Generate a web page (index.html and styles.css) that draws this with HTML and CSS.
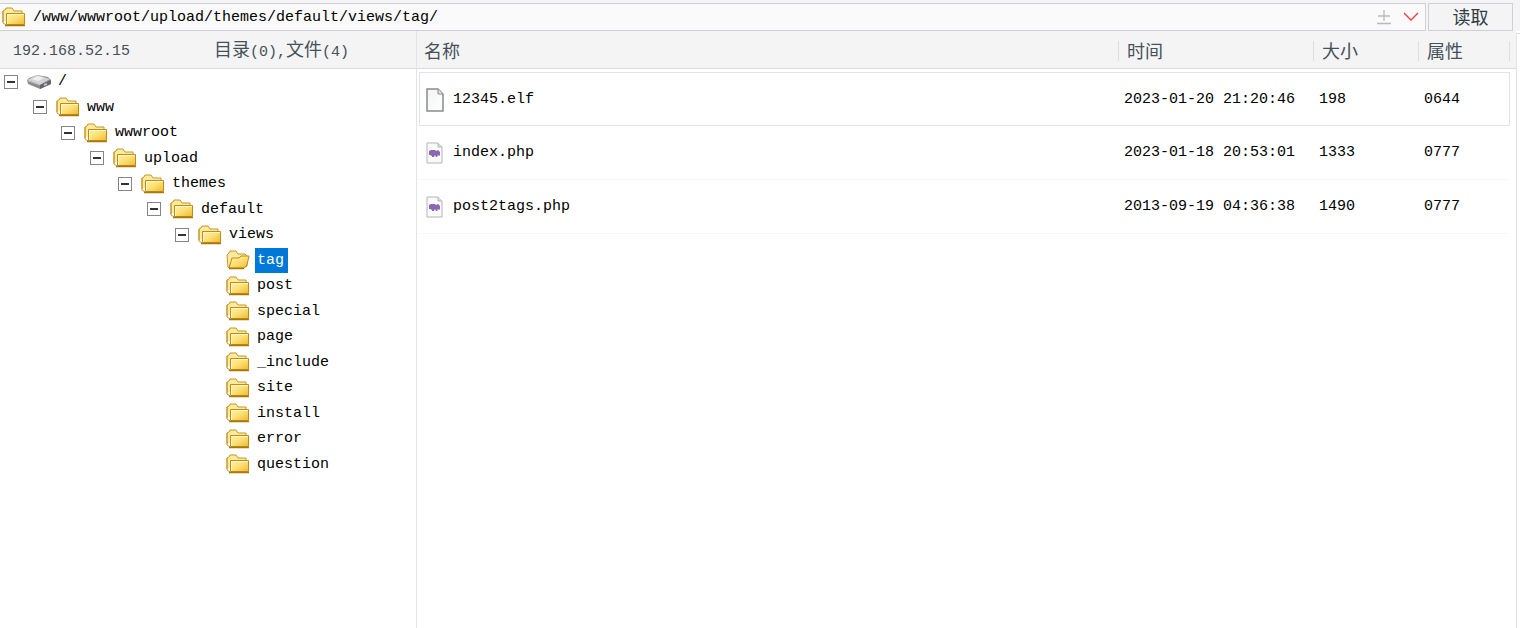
FILE: index.html
```
<!DOCTYPE html>
<html lang="zh-CN">

<head>
  <meta charset="UTF-8">
  <meta name="viewport" content="width=device-width, initial-scale=1.0">
  <title>192.168.52.15</title>
  <link rel="stylesheet" href="styles.css">
</head>

<body>
  <!-- Shared icons -->
  <svg class="sprite" aria-hidden="true">
    <defs>
      <linearGradient id="gold" x1="0" y1="0" x2="1" y2="1">
        <stop offset="0" stop-color="#fff3ad" />
        <stop offset="0.5" stop-color="#fbdf72" />
        <stop offset="1" stop-color="#f0b931" />
      </linearGradient>
      <linearGradient id="paper" x1="0" y1="0" x2="1" y2="1">
        <stop offset="0" stop-color="#f1f4f5" />
        <stop offset="1" stop-color="#ffffff" />
      </linearGradient>
    </defs>
    <symbol id="folder" viewBox="0 0 24 20">
      <path d="M1 15V4l2-1 1-2h6l2 3h8v3" fill="#fdeb9b" stroke="#c4962a" />
      <path d="M1 4v12l3 2" fill="none" stroke="#c4962a" />
      <path d="M4.500 6.500h18v11h-18z" fill="url(#gold)" stroke="#c08a18" />
      <path d="M5.500 17V7.500H22" fill="none" stroke="#fff8cf" />
      <path d="M3 18.500h20" stroke="#a87709" stroke-width="1.500" />
    </symbol>
    <symbol id="folder-open" viewBox="0 0 24 20">
      <path d="M2 17L1 5l2-2 1-2h6l2 3h7l2 2v10l-3 2H3z" fill="#fdeb9b" stroke="#c4962a" />
      <path d="M6 8h7l2-2h8l-2 9-3 3H3z" fill="url(#gold)" stroke="#c08a18" />
      <path d="M3 18.500h15" stroke="#a87709" stroke-width="1.500" />
    </symbol>
    <symbol id="drive" viewBox="0 0 24 20">
      <path d="M0 8l2-2 8-3 11 2 3 3v4l-11 5L1 12z" fill="#8b8b90" />
      <path d="M0 8l10-5 13 4-10 6z" fill="#d2d2d4" />
      <path d="M5 7l6-3 6 2-6 3z" fill="#efefef" />
      <path d="M13 13l11-5v4l-11 5z" fill="#66666c" />
      <path d="M1 9l12 4" stroke="#b8b8bb" />
      <path d="M17 13l3-1" stroke="#b9bdd8" stroke-width="2" />
    </symbol>
    <symbol id="file" viewBox="0 0 18 24">
      <path d="M1 1h11l5 5v17H1z" fill="url(#paper)" stroke="#8b8b8b" stroke-width="1.500" />
      <path d="M12 1v5h5" fill="#e1e1e1" stroke="#8b8b8b" />
    </symbol>
    <symbol id="php" viewBox="0 0 18 24">
      <path d="M1 2h11l4 4v16H1z" fill="#f9fafa" stroke="#b4b4b4" />
      <path d="M12 2v4h4" fill="#e3e3e3" stroke="#b4b4b4" />
      <path d="M3 10l2-1h4l1 1 2-1 2 2v3l-1 1-1-1-1 2h-1l-1-2-1 2H6v-1l-2-1H3z" fill="#8b66b5" />
    </symbol>
  </svg>

  <form class="toolbar">
    <div class="path">
      <svg class="icon"><use href="#folder" /></svg>
      <input type="text" value="/www/wwwroot/upload/themes/default/views/tag/" aria-label="路径">
      <button type="button" class="tool" aria-label="添加">
        <svg width="14" height="16" viewBox="0 0 14 16"><path d="M7 1v11M1 7h12M0 14.500h14" stroke="#b9b9b9" stroke-width="1.300" /></svg>
      </button>
      <button type="button" class="tool" aria-label="展开">
        <svg width="16" height="10" viewBox="0 0 16 10"><path d="M1 1l7 7 7-7" fill="none" stroke="#f03a3a" stroke-width="1.300" /></svg>
      </button>
    </div>
    <button type="button" class="read">读取</button>
  </form>

  <main class="browser">
    <section class="folders">
      <header class="status">
        <span class="host">192.168.52.15</span>
        <span><b>目录</b>(0),<b>文件</b>(4)</span>
      </header>
      <ul class="tree">
        <li class="level-0"><button class="toggle" aria-label="折叠"></button><svg class="icon"><use href="#drive" /></svg><span class="label">/</span></li>
        <li class="level-1"><button class="toggle" aria-label="折叠"></button><svg class="icon"><use href="#folder" /></svg><span class="label">www</span></li>
        <li class="level-2"><button class="toggle" aria-label="折叠"></button><svg class="icon"><use href="#folder" /></svg><span class="label">wwwroot</span></li>
        <li class="level-3"><button class="toggle" aria-label="折叠"></button><svg class="icon"><use href="#folder" /></svg><span class="label">upload</span></li>
        <li class="level-4"><button class="toggle" aria-label="折叠"></button><svg class="icon"><use href="#folder" /></svg><span class="label">themes</span></li>
        <li class="level-5"><button class="toggle" aria-label="折叠"></button><svg class="icon"><use href="#folder" /></svg><span class="label">default</span></li>
        <li class="level-6"><button class="toggle" aria-label="折叠"></button><svg class="icon"><use href="#folder" /></svg><span class="label">views</span></li>
        <li class="leaf"><svg class="icon"><use href="#folder-open" /></svg><span class="label selected">tag</span></li>
        <li class="leaf"><svg class="icon"><use href="#folder" /></svg><span class="label">post</span></li>
        <li class="leaf"><svg class="icon"><use href="#folder" /></svg><span class="label">special</span></li>
        <li class="leaf"><svg class="icon"><use href="#folder" /></svg><span class="label">page</span></li>
        <li class="leaf"><svg class="icon"><use href="#folder" /></svg><span class="label">_include</span></li>
        <li class="leaf"><svg class="icon"><use href="#folder" /></svg><span class="label">site</span></li>
        <li class="leaf"><svg class="icon"><use href="#folder" /></svg><span class="label">install</span></li>
        <li class="leaf"><svg class="icon"><use href="#folder" /></svg><span class="label">error</span></li>
        <li class="leaf"><svg class="icon"><use href="#folder" /></svg><span class="label">question</span></li>
      </ul>
    </section>

    <section class="files">
      <table>
        <thead>
          <tr>
            <th class="col-name"><span>名称</span></th>
            <th class="col-time"><span>时间</span></th>
            <th class="col-size"><span>大小</span></th>
            <th class="col-attr"><span>属性</span></th>
          </tr>
        </thead>
        <tbody>
          <tr class="focused">
            <td><div class="name"><svg class="file-icon"><use href="#file" /></svg>12345.elf</div></td>
            <td>2023-01-20 21:20:46</td>
            <td>198</td>
            <td>0644</td>
          </tr>
          <tr>
            <td><div class="name"><svg class="file-icon"><use href="#php" /></svg>index.php</div></td>
            <td>2023-01-18 20:53:01</td>
            <td>1333</td>
            <td>0777</td>
          </tr>
          <tr>
            <td><div class="name"><svg class="file-icon"><use href="#php" /></svg>post2tags.php</div></td>
            <td>2013-09-19 04:36:38</td>
            <td>1490</td>
            <td>0777</td>
          </tr>
        </tbody>
      </table>
    </section>
    <div class="edge"></div>
  </main>
</body>

</html>
```
FILE: styles.css
```
* {
  box-sizing: border-box;
}

body {
  display: flex;
  flex-direction: column;
  min-height: 100vh;
  margin: 0;
  background: #fff;
  color: #000;
  font-family: "Liberation Mono", "Noto Sans CJK SC", monospace;
  font-size: 15px;
  line-height: 20px;
}

button,
input {
  margin: 0;
  padding: 0;
  color: inherit;
  font: inherit;
}

.sprite {
  position: absolute;
  width: 0;
  height: 0;
}

.icon {
  flex: none;
  width: 24px;
  height: 20px;
}

/* Path bar */
.toolbar {
  display: flex;
  gap: 2px;
  padding: 3px 7px 0 0;
  background: #f4f4f4;
}

.path {
  display: flex;
  flex: 1;
  align-items: center;
  height: 28px;
  padding: 0 1px 0 2px;
  border: 1px solid #cfcfd8;
  border-left: none;
  background: #fafafa;
}

.path input {
  flex: 1;
  min-width: 0;
  padding: 2px 0 0 7px;
  border: none;
  outline: none;
  background: none;
}

.tool {
  display: flex;
  align-items: center;
  justify-content: center;
  width: 27px;
  height: 24px;
  border: none;
  background: none;
}

.read {
  width: 85px;
  height: 28px;
  padding-top: 3px;
  border: 1px solid #cfcfd8;
  background: #f4f4f4;
  color: #303c46;
  font-size: 18px;
}

.browser {
  display: flex;
  flex: 1;
}

/* Folder tree */
.folders {
  width: 417px;
  border-right: 1px solid #e4e4e8;
}

.status {
  display: flex;
  align-items: center;
  height: 38px;
  padding: 4px 0 0 13px;
  border-bottom: 1px solid #dcdce0;
  background: #f4f4f4;
  color: #45505a;
}

.status b {
  font-size: 18px;
  font-weight: normal;
}

.host {
  width: 201px;
}

.tree {
  display: grid;
  grid-auto-rows: 1fr;
  height: 408px;
  margin: 0;
  padding: 0;
  list-style: none;
}

.tree li {
  display: flex;
  align-items: center;
}

.level-0 { padding-left: 4px; }
.level-1 { padding-left: 33px; }
.level-2 { padding-left: 61px; }
.level-3 { padding-left: 90px; }
.level-4 { padding-left: 118px; }
.level-5 { padding-left: 147px; }
.level-6 { padding-left: 175px; }
.leaf { padding-left: 226px; }

.toggle {
  display: flex;
  align-items: center;
  justify-content: center;
  width: 14px;
  height: 14px;
  margin-right: 9px;
  border: 1px solid #858585;
  background: #fff;
}

.toggle::before {
  content: "";
  width: 8px;
  height: 2px;
  background: #333;
}

.label {
  margin-left: 5px;
  padding: 3px 2px 2px;
}

.label.selected {
  padding-right: 4px;
  background: #0078d7;
  color: #fff;
}

/* File list */
.files {
  flex: 1;
  padding: 0 6px 0 2px;
  background: linear-gradient(#f4f4f4 37px, #dcdce0 37px 38px, #fff 38px);
}

table {
  width: 100%;
  border-collapse: separate;
  border-spacing: 0;
  table-layout: fixed;
}

th {
  height: 41px;
  padding: 0 0 2px;
  color: #45505a;
  font-size: 18px;
  font-weight: normal;
  line-height: 16px;
  text-align: left;
}

th span {
  display: block;
  padding: 4px 0 0 8px;
  border-left: 1px solid #dedee2;
}

.col-name span {
  padding-left: 5px;
  border-left: none;
}

.col-time {
  width: 195px;
}

.col-size {
  width: 105px;
}

.col-attr {
  width: 92px;
}

.col-attr span {
  border-right: 1px solid #dedee2;
}

td {
  height: 54px;
  padding: 1px 0 0 6px;
  border-bottom: 1px solid #f7f7f7;
}

td:first-child {
  border-left: 1px solid transparent;
}

.focused td {
  border-top: 1px solid #e2e0f6;
  border-bottom-color: #e2e0f6;
}

.focused td:first-child {
  border-left-color: #e2e0f6;
}

.focused td:last-child {
  border-right: 1px solid #e2e0f6;
}

.name {
  display: flex;
  align-items: center;
  gap: 9px;
}

.file-icon {
  width: 18px;
  height: 24px;
}

.edge {
  width: 4px;
  margin-top: 2px;
  border-top: 1px solid #dcdce0;
  border-left: 1px solid #e4e4e8;
}
```
